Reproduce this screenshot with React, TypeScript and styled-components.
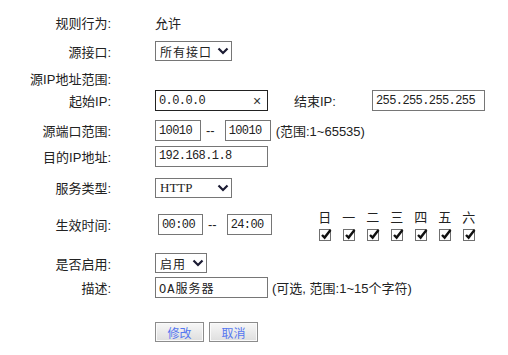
import * as React from 'react'
import styled, { createGlobalStyle } from 'styled-components'

const GlobalStyle = createGlobalStyle`
  body {
    margin: 0;
    background: #fff;
    color: #222;
    font-family: "Liberation Sans", "Noto Sans CJK SC", sans-serif;
    font-size: 13px;
  }
`

const Form = styled.form`
  padding-top: 12px;
`

const Row = styled.div<{ $top: number; $h: number }>`
  display: flex;
  align-items: center;
  margin-top: ${(p) => p.$top}px;
  height: ${(p) => p.$h}px;
`

const Label = styled.div`
  flex: none;
  width: 111px;
  margin-right: 44px;
  text-align: right;
  white-space: nowrap;
`

const Value = styled.span`
  white-space: nowrap;
`

const TextInput = styled.input<{ $w: number; $ml?: number }>`
  box-sizing: border-box;
  width: ${(p) => p.$w}px;
  height: 21px;
  margin: 0 0 0 ${(p) => p.$ml ?? 0}px;
  padding: 0 3px;
  border: 1px solid #767676;
  border-radius: 0;
  background: #fff;
  color: #222;
  font-family: "Liberation Mono", "Noto Sans CJK SC", monospace;
  font-size: 12px;
  letter-spacing: -0.6px;
  outline: none;
`

const DescInput = styled(TextInput)`
  font-size: 12px;
  letter-spacing: 1px;
`

const ClearField = styled.div`
  box-sizing: border-box;
  display: flex;
  align-items: center;
  width: 113px;
  height: 21px;
  border: 1px solid #222;
  background: #fff;
`

const BareInput = styled.input`
  flex: 1;
  min-width: 0;
  height: 100%;
  padding: 0 3px;
  border: 0;
  background: transparent;
  color: #222;
  font-family: "Liberation Mono", monospace;
  font-size: 12px;
  letter-spacing: -0.6px;
  outline: none;
`

const ClearMark = styled.span`
  width: 14px;
  margin-right: 3px;
  text-align: center;
  font-size: 14px;
  line-height: 1;
  color: #333;
`

const EndLabel = styled.span`
  width: 78px;
  padding-left: 26px;
  white-space: nowrap;
`

const Dash = styled.span`
  padding: 0 10px 0 5px;
`

const Hint = styled.span<{ $ml: number }>`
  margin-left: ${(p) => p.$ml}px;
  white-space: nowrap;
`

const SelectWrap = styled.div`
  position: relative;
  display: inline-flex;
`

const Select = styled.select<{ $w: number; $serif?: boolean }>`
  appearance: none;
  box-sizing: border-box;
  width: ${(p) => p.$w}px;
  height: 20px;
  padding: 0 0 0 4px;
  border: 1px solid #767676;
  border-radius: 0;
  background: #fff;
  color: #222;
  font-family: ${(p) =>
    p.$serif ? '"Liberation Serif", serif' : '"Noto Sans CJK SC", sans-serif'};
  font-size: ${(p) => (p.$serif ? '13px' : '12px')};
  letter-spacing: ${(p) => (p.$serif ? '0' : '1px')};
  outline: none;
`

const Chevron = styled.svg`
  position: absolute;
  right: 3px;
  top: 6px;
  pointer-events: none;
`

const Days = styled.div`
  display: grid;
  grid-template-columns: repeat(7, 24px);
  row-gap: 4px;
  margin-left: 41px;
  justify-items: center;
`

const DayName = styled.span`
  font-family: "Noto Sans CJK SC", sans-serif;
  font-size: 13px;
  line-height: 16px;
`

const Check = styled.span`
  box-sizing: border-box;
  display: block;
  width: 12px;
  height: 12px;
  border: 1px solid #6f6f6f;
  background: #fff;
  position: relative;
`

const CheckMark = styled.svg`
  position: absolute;
  left: 0;
  top: -2px;
  overflow: visible;
`

const Button = styled.button`
  box-sizing: border-box;
  width: 49px;
  height: 20px;
  margin-right: 5px;
  padding: 0;
  border: 1px solid #8c8c8c;
  border-radius: 0;
  background: linear-gradient(#f7f7f7, #dedede);
  color: #5577f0;
  font-family: "Noto Sans CJK SC", sans-serif;
  font-size: 12px;
  box-shadow: inset 0 0 0 1px #fafafa;
`

const DropDown = ({ w, value, serif }: { w: number; value: string; serif?: boolean }) => (
  <SelectWrap>
    <Select $w={w} $serif={serif} defaultValue={value}>
      <option>{value}</option>
    </Select>
    <Chevron width="12" height="8" viewBox="0 0 12 8">
      <path d="M1.5 1.5 L6 6 L10.5 1.5" fill="none" stroke="#1b1b33" strokeWidth="2.2" />
    </Chevron>
  </SelectWrap>
)

const days = ['日', '一', '二', '三', '四', '五', '六']

const App = () => {
  return (
    <>
      <GlobalStyle />
      <Form onSubmit={(e) => e.preventDefault()}>
        <Row $top={0} $h={20}>
          <Label>规则行为:</Label>
          <Value>允许</Value>
        </Row>
        <Row $top={9} $h={20}>
          <Label>源接口:</Label>
          <DropDown w={77} value="所有接口" />
        </Row>
        <Row $top={7} $h={20}>
          <Label>源IP地址范围:</Label>
        </Row>
        <Row $top={2} $h={21}>
          <Label>起始IP:</Label>
          <ClearField>
            <BareInput defaultValue="0.0.0.0" />
            <ClearMark>×</ClearMark>
          </ClearField>
          <EndLabel>结束IP:</EndLabel>
          <TextInput $w={113} defaultValue="255.255.255.255" />
        </Row>
        <Row $top={9} $h={21}>
          <Label>源端口范围:</Label>
          <TextInput $w={46} defaultValue="10010" />
          <Dash>--</Dash>
          <TextInput $w={46} defaultValue="10010" />
          <Hint $ml={5}>(范围:1~65535)</Hint>
        </Row>
        <Row $top={4} $h={22}>
          <Label>目的IP地址:</Label>
          <TextInput $w={113} defaultValue="192.168.1.8" />
        </Row>
        <Row $top={10} $h={21}>
          <Label>服务类型:</Label>
          <DropDown w={77} value="HTTP" serif />
        </Row>
        <Row $top={9} $h={35}>
          <Label>生效时间:</Label>
          <TextInput $w={45} $ml={3} defaultValue="00:00" />
          <Dash>--</Dash>
          <TextInput $w={45} defaultValue="24:00" />
          <Days>
            {days.map((d) => (
              <DayName key={d}>{d}</DayName>
            ))}
            {days.map((d) => (
              <Check key={d}>
                <CheckMark width="12" height="12" viewBox="0 0 12 12">
                  <path
                    d="M2 7 L4.6 9.6 L10.5 2"
                    fill="none"
                    stroke="#111"
                    strokeWidth="2.4"
                  />
                </CheckMark>
              </Check>
            ))}
          </Days>
        </Row>
        <Row $top={11} $h={20}>
          <Label>是否启用:</Label>
          <DropDown w={52} value="启用" />
        </Row>
        <Row $top={4} $h={21}>
          <Label>描述:</Label>
          <DescInput $w={113} defaultValue="OA服务器" />
          <Hint $ml={4}>(可选, 范围:1~15个字符)</Hint>
        </Row>
        <Row $top={24} $h={20}>
          <Label />
          <Button type="button">修改</Button>
          <Button type="button">取消</Button>
        </Row>
      </Form>
    </>
  )
}

export default App
